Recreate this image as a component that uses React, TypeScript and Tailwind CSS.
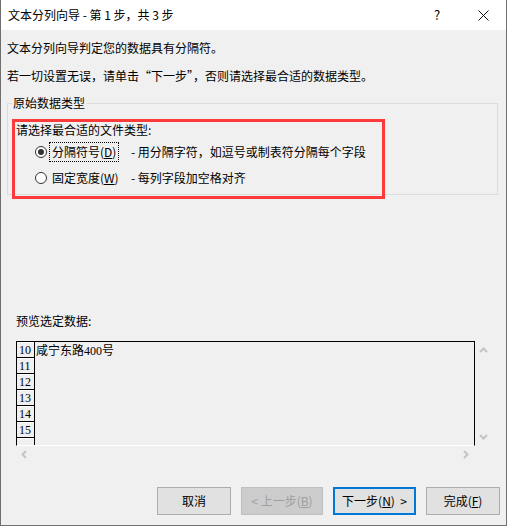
import React from 'react';

const ui = { fontFamily: '"Noto Sans CJK SC", "Noto Sans", sans-serif' };
const song = { fontFamily: '"Liberation Serif", "Noto Sans CJK SC", serif' };

const Chevron = ({ dir }: { dir: 'up' | 'down' | 'left' | 'right' }) => {
  const pts = {
    up: '1,6 4.5,2.5 8,6',
    down: '1,2 4.5,5.5 8,2',
    left: '6,1 2.5,4.5 6,8',
    right: '2,1 5.5,4.5 2,8',
  }[dir];
  return (
    <svg width="9" height="9" viewBox="0 0 9 9">
      <polyline points={pts} fill="none" stroke="#c4c4c4" strokeWidth="2" />
    </svg>
  );
};

const Radio = ({ checked }: { checked?: boolean }) => (
  <span className="flex h-[12px] w-[12px] shrink-0 items-center justify-center rounded-full border border-[#333] bg-white">
    {checked && <span className="h-[6px] w-[6px] rounded-full bg-[#333]" />}
  </span>
);

const Btn = ({ w, children, kind }: { w: string; children: React.ReactNode; kind?: 'off' | 'focus' }) => (
  <div
    className={`flex h-[28px] items-center justify-center whitespace-nowrap text-[12px] leading-[16px] ${w} ${
      kind === 'off'
        ? 'border border-[#bfbfbf] bg-[#cccccc] text-[#a0a0a0]'
        : kind === 'focus'
        ? 'border-2 border-[#0078d7] bg-[#e1e1e1] text-black'
        : 'border border-[#adadad] bg-[#e1e1e1] text-black'
    }`}
  >
    <span>{children}</span>
  </div>
);

const rows = ['10', '11', '12', '13', '14', '15', ''];

export default function App() {
  return (
    <div
      className="relative flex h-[526px] w-[507px] flex-col border-x border-b border-[#6f6f6f] bg-[#f0f0f0] text-black"
      style={ui}
    >
      {/* title bar */}
      <div className="flex h-[30px] shrink-0 items-center bg-white pl-[7px]">
        <span className="whitespace-pre text-[12px] leading-[16px]">文本分列向导 - 第 1 步，共 3 步</span>
        <div className="ml-auto flex h-full">
          <div className="flex w-[46px] items-center justify-center text-[13px]">?</div>
          <div className="flex w-[46px] items-center justify-center">
            <svg width="11" height="11" viewBox="0 0 11 11">
              <path d="M0.5 0.5 L10.5 10.5 M10.5 0.5 L0.5 10.5" stroke="#111" strokeWidth="1" />
            </svg>
          </div>
        </div>
      </div>

      <div className="flex flex-col pl-[6px] text-[12px] leading-[16px]">
        <p className="mt-[10px]">文本分列向导判定您的数据具有分隔符。</p>
        <p className="mt-[12px]">若一切设置无误，请单击“下一步”，否则请选择最合适的数据类型。</p>

        <fieldset className="mt-[11px] h-[100px] w-[491px] border border-[#dcdcdc] pl-[8px]">
          <legend className="-ml-[4px] px-[1px]">原始数据类型</legend>
          <p className="mt-[11px]">请选择最合适的文件类型:</p>
          <div className="mt-[4px] flex h-[20px] items-center pl-[19px]">
            <Radio checked />
            <span className="ml-[2px] mr-[12px] block h-[20px] w-[70px] whitespace-nowrap border border-dotted border-black px-[2px] leading-[18px]">
              分隔符号(<span className="underline">D</span>)
            </span>
            <span className="whitespace-nowrap">- 用分隔字符，如逗号或制表符分隔每个字段</span>
          </div>
          <div className="mt-[6px] flex h-[20px] items-center pl-[19px]">
            <Radio />
            <span className="ml-[2px] mr-[12px] block h-[20px] w-[70px] whitespace-nowrap border border-transparent px-[2px] leading-[18px]">
              固定宽度(<span className="underline">W</span>)
            </span>
            <span className="whitespace-nowrap">- 每列字段加空格对齐</span>
          </div>
        </fieldset>

        <p className="ml-[9px] mt-[118px]">预览选定数据:</p>

        <div className="ml-[9px] mt-[12px] grid grid-cols-[459px_16px] grid-rows-[105px_16px]">
          <div className="flex overflow-hidden border-x border-t border-b border-black border-b-white">
            <div className="flex w-[18px] shrink-0 flex-col border-r border-black">
              {rows.map((r, i) => (
                <div
                  key={i}
                  className="flex h-[16px] shrink-0 items-end border-b border-t border-black border-t-white pl-[2px] text-[12px] leading-[14px]"
                  style={song}
                >
                  {r}
                </div>
              ))}
            </div>
            <div className="pl-[1px] pt-[1px] text-[12px] leading-[16px]" style={song}>
              咸宁东路400号
            </div>
          </div>
          <div className="flex flex-col items-center justify-between pb-[4px] pt-[5px]">
            <Chevron dir="up" />
            <Chevron dir="down" />
          </div>
          <div className="flex items-center justify-between px-[4px]">
            <Chevron dir="left" />
            <Chevron dir="right" />
          </div>
          <div />
        </div>

        <div className="mt-[25px] flex justify-end gap-[10px] pr-[6px]">
          <Btn w="w-[74px]">取消</Btn>
          <Btn w="w-[82px]" kind="off">
            &lt; 上一步(<span className="underline">B</span>)
          </Btn>
          <Btn w="w-[83px]" kind="focus">
            下一步(<span className="underline">N</span>)&nbsp;&nbsp;&gt;
          </Btn>
          <Btn w="w-[74px]">
            完成(<span className="underline">F</span>)
          </Btn>
        </div>
      </div>

      {/* annotation box */}
      <div className="pointer-events-none absolute left-[11px] top-[119px] h-[80px] w-[373px] border-[3px] border-[#fc3a3a]" />
    </div>
  );
}
